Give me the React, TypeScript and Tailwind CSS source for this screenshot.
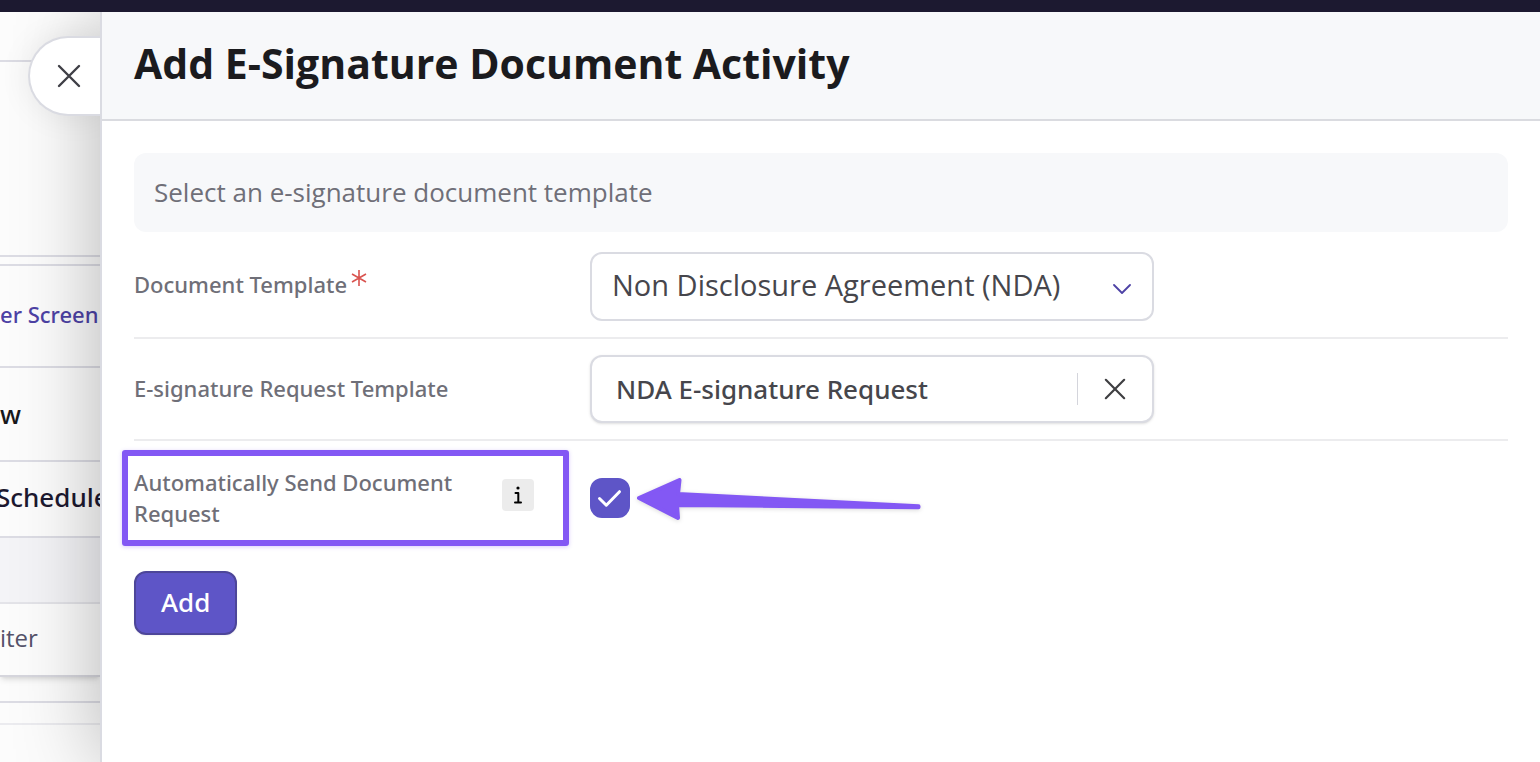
import React, { useState } from 'react';

const DOCUMENT_TEMPLATES = ['Non Disclosure Agreement (NDA)'];

function CrossIcon({ className }: { className: string }) {
  return (
    <svg viewBox="0 0 24 24" className={className} fill="none" stroke="currentColor" strokeWidth="2.4" strokeLinecap="round" aria-hidden="true">
      <path d="M2 2L22 22M22 2L2 22" />
    </svg>
  );
}

function PageBehind() {
  return (
    <div className="w-[100px] shrink-0 overflow-hidden bg-[#fcfcfc] text-[24px] leading-8 whitespace-nowrap">
      <div className="h-[50px] border-b-2 border-[#dcdce4]" />
      <div className="h-[195px] border-b-2 border-[#dcdce4]" />
      <div className="h-[9px] border-b-2 border-[#dcdce4]" />
      <div className="flex h-[102px] items-center border-b-2 border-[#dcdce4] pb-1 font-['Noto_Sans','Open_Sans',sans-serif] text-[22px] font-medium">
        <a href="#screens" className="text-[#4d42a5]">er Screen</a>
      </div>
      <div className="flex h-[94px] items-center border-b-2 border-[#dcdce4] font-['Noto_Sans','Open_Sans',sans-serif] text-[26px] font-medium text-[#18181b]">w</div>
      <div className="flex h-[76px] items-center border-b-2 border-[#dcdce4] pb-1 font-['Noto_Sans','Open_Sans',sans-serif] text-[26px] font-medium text-[#1c1930]">
        <span className="-ml-1">Schedule</span>
      </div>
      <div className="h-[66px] border-b-2 border-[#e4e4e9] bg-[#f4f4f7]" />
      <div className="flex h-[73px] items-center border-b-2 border-[#d6d6dd] pb-1 text-[#55536a] shadow-md">iter</div>
      <div className="h-[26px] border-b-2 border-[#dcdce4]" />
      <div className="h-[22px] border-b-2 border-[#ebebef]" />
    </div>
  );
}

export default function App() {
  const [autoSend, setAutoSend] = useState(true);
  const [request, setRequest] = useState('NDA E-signature Request');

  return (
    <div className="flex min-h-screen flex-col bg-white font-['Open_Sans','Noto_Sans',sans-serif]">
      <div className="h-3 bg-[#1c1930]" />
      <div className="flex flex-1 overflow-hidden">
        <PageBehind />
        <main className="relative min-w-0 flex-1 border-l-2 border-[#dadbe2] bg-white shadow-[0_0_80px_rgba(0,0,0,0.29)]">
          <button
            type="button"
            aria-label="Close panel"
            className="absolute top-6 -left-[74px] flex h-20 w-[72px] items-center rounded-l-full border-2 border-r-0 border-[#dadbe2] bg-white pl-[27px] text-[#3f3f46] shadow-[0_0_32px_rgba(0,0,0,0.08)] [clip-path:inset(-40px_0_-40px_-40px)]"
          >
            <CrossIcon className="size-6" />
          </button>

          <header className="border-b-2 border-[#dadbe0] bg-[#f7f8fa] px-8 pt-6 pb-7">
            <h1 className="text-[41px] leading-[55px] font-bold text-[#1b1b1e]">Add E-Signature Document Activity</h1>
          </header>

          <form className="px-8 py-8" onSubmit={(e) => e.preventDefault()}>
            <p className="mb-1 rounded-xl bg-[#f7f8fa] px-5 py-5 text-[26px] leading-[39px] text-[#6f6f78]">
              Select an e-signature document template
            </p>

            <div className="flex items-center border-b-2 border-[#ececee] py-4">
              <label htmlFor="document-template" className="flex w-[456px] shrink-0 items-start gap-1 pb-1 font-['Noto_Sans','Open_Sans',sans-serif] text-[22px] leading-[31px] font-medium text-[#6f6f78]">
                Document Template
                <svg viewBox="0 0 16 16" className="mt-px size-4" stroke="#d9534f" strokeWidth="1.6" aria-hidden="true">
                  <path d="M8 0V16M1 4L15 12M15 4L1 12" />
                </svg>
              </label>
              <div className="relative w-full max-w-[564px]">
                <select
                  id="document-template"
                  className="block h-[69px] w-full appearance-none rounded-xl border-2 border-[#dadbe2] bg-white pr-20 pb-1 pl-5 text-[29px] text-[#46464c]"
                >
                  {DOCUMENT_TEMPLATES.map((name) => (
                    <option key={name}>{name}</option>
                  ))}
                </select>
                <svg viewBox="0 0 18 10" className="pointer-events-none absolute top-8 right-[23px] h-[10px] w-[18px]" fill="none" stroke="#4d42a5" strokeWidth="1.800" strokeLinecap="round" strokeLinejoin="round" aria-hidden="true">
                  <path d="M1 1L9 9L17 1" />
                </svg>
              </div>
            </div>

            <div className="flex items-center border-b-2 border-[#ececee] py-4">
              <label htmlFor="request-template" className="w-[456px] shrink-0 pb-0.5 font-['Noto_Sans','Open_Sans',sans-serif] text-[22px] leading-[31px] font-medium text-[#6f6f78]">
                E-signature Request Template
              </label>
              <div className="flex h-[68px] w-full max-w-[564px] items-center rounded-xl border-2 border-[#dadbe2] bg-white shadow-sm">
                <input
                  id="request-template"
                  type="text"
                  value={request}
                  onChange={(e) => setRequest(e.target.value)}
                  className="h-full min-w-0 flex-1 rounded-xl bg-transparent pl-6 font-['Noto_Sans','Open_Sans',sans-serif] text-[26px] font-medium text-[#46464c]"
                />
                <button
                  type="button"
                  aria-label="Clear request template"
                  onClick={() => setRequest('')}
                  className="flex h-8 w-[75px] items-center justify-center border-l border-[#d4d5dc] text-[#3f3f42]"
                >
                  <CrossIcon className="size-[22px]" />
                </button>
              </div>
            </div>

            <div className="flex items-center py-[26px]">
              <div className="relative flex w-[456px] shrink-0 items-center justify-between pr-14">
                <label htmlFor="auto-send" className="w-[340px] font-['Noto_Sans','Open_Sans',sans-serif] text-[22px] leading-[31px] font-medium text-[#6f6f78]">
                  Automatically Send Document Request
                </label>
                <button
                  type="button"
                  aria-label="About automatic sending"
                  className="mb-1.5 flex size-8 items-center justify-center rounded bg-[#ececec] text-black"
                >
                  <svg viewBox="0 0 8 18" className="h-[18px] w-2" fill="none" stroke="currentColor" strokeWidth="2" strokeLinecap="round" strokeLinejoin="round" aria-hidden="true">
                    <circle cx="4" cy="2" r="1.6" fill="currentColor" stroke="none" />
                    <path d="M1.5 7H4.3V16.5M1 16.5H7" />
                  </svg>
                </button>
                <div className="pointer-events-none absolute -inset-y-[17px] right-[21px] -left-3 rounded-[3px] border-6 border-[#8358f4] shadow-[0_1px_4px_rgba(131,88,244,0.3)]" />
              </div>
              <div className="relative size-10">
                <input
                  id="auto-send"
                  type="checkbox"
                  checked={autoSend}
                  onChange={(e) => setAutoSend(e.target.checked)}
                  className="block size-10 appearance-none rounded-xl border-2 border-[#5e55c7] bg-white checked:bg-[#5e55c7]"
                />
                <svg viewBox="0 0 40 40" className="pointer-events-none absolute inset-0 size-10" fill="none" stroke="white" strokeWidth="3" strokeLinecap="round" strokeLinejoin="round" aria-hidden="true">
                  <path d="M9.500 20.500L16.300 27.200L29.500 13.700" />
                </svg>
                <svg viewBox="0 0 286 48" className="pointer-events-none absolute -top-1 left-[46px] h-12 w-[286px] drop-shadow-sm" fill="#8358f4" stroke="#8358f4" strokeWidth="4" strokeLinejoin="round" aria-hidden="true">
                  <path d="M3 24L43.500 6L42 20L282.500 32.300V33.200L41 31L42 44Z" />
                </svg>
              </div>
            </div>

            <button
              type="submit"
              className="mt-4 h-16 rounded-xl border-2 border-[#4d4699] bg-[#5e55c7] px-[25px] pb-0.5 font-['Noto_Sans','Open_Sans',sans-serif] text-[26px] leading-9 font-medium text-white shadow-xs"
            >
              Add
            </button>
          </form>
        </main>
      </div>
    </div>
  );
}
